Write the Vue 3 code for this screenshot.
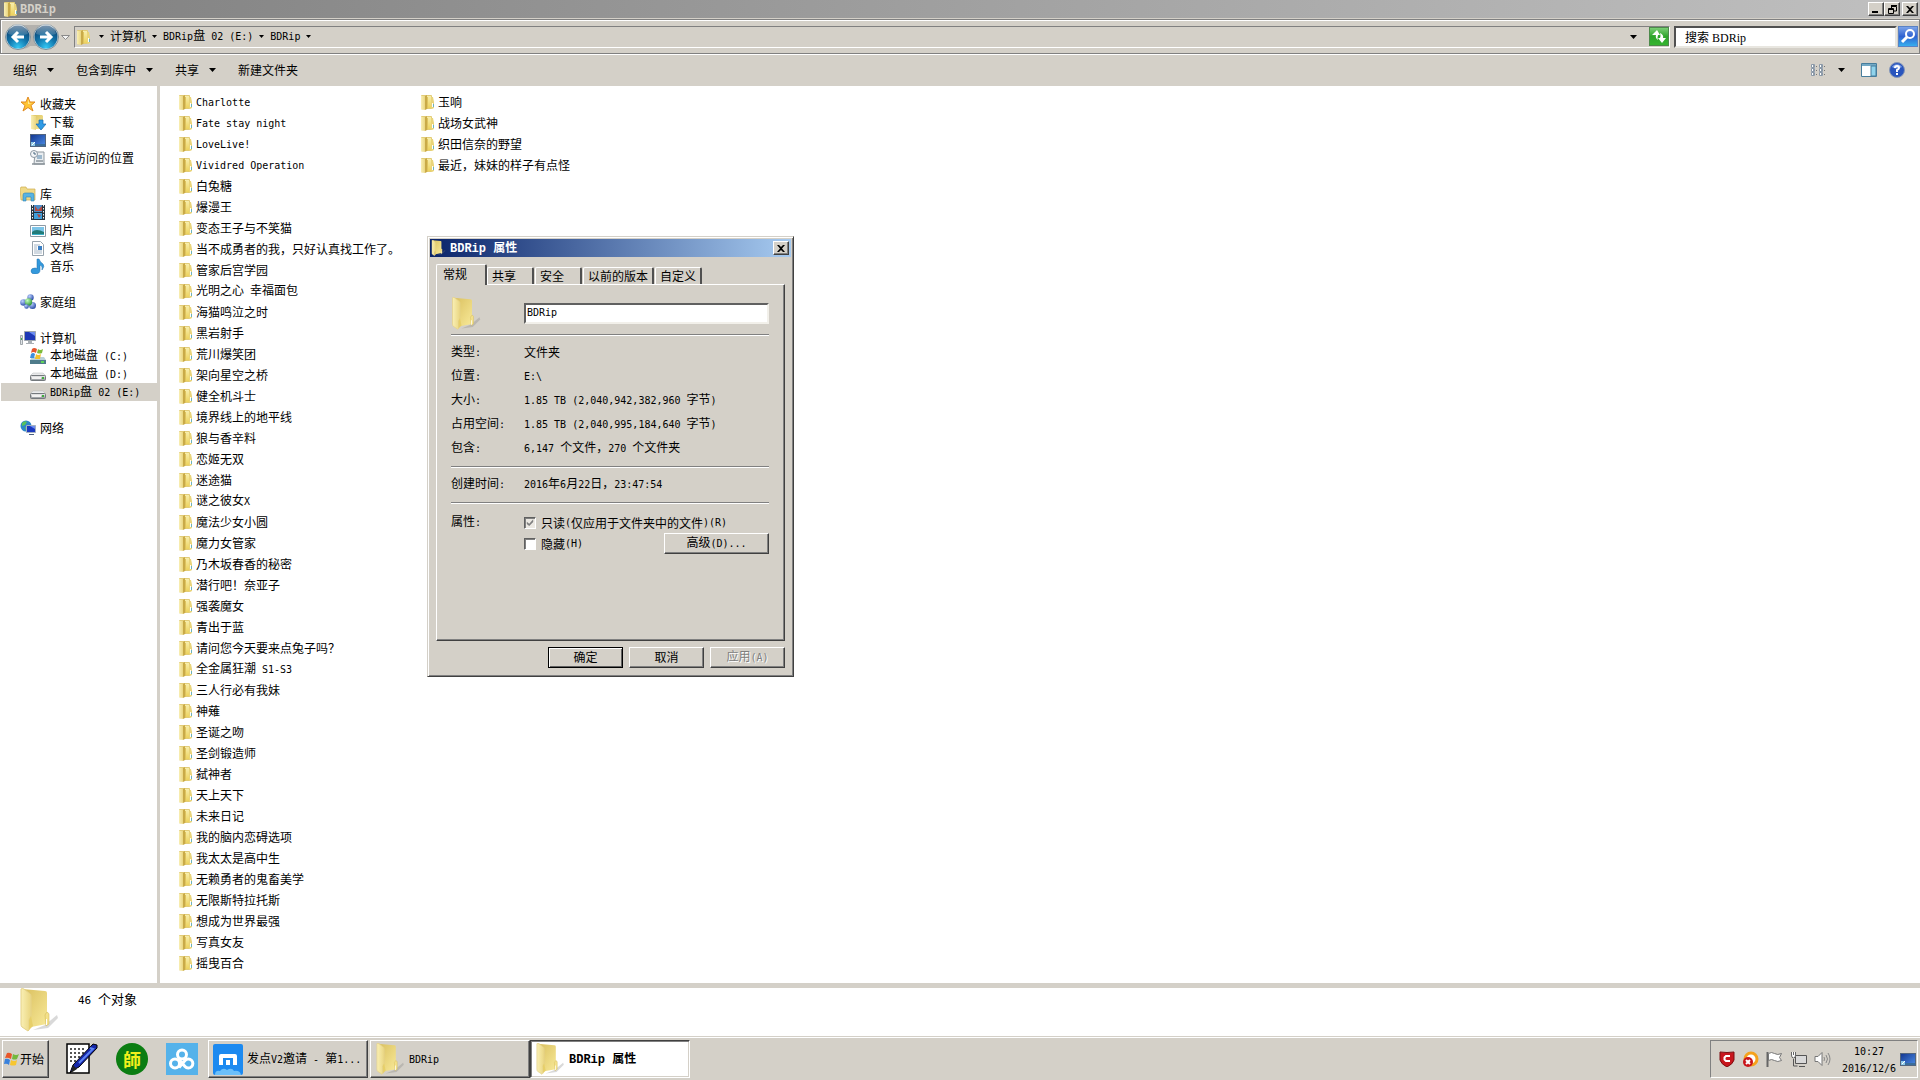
<script setup>
import { h } from 'vue'

// Latin runs are set in a half-width face, so two letters fill one Chinese cell
const T = (props) =>
  props.t
    .split(/([\x20-\x7e]+)/)
    .filter((s) => s)
    .map((s) => (/^[\x20-\x7e]/.test(s) ? h('span', { class: 'latin' }, s) : s))
T.props = ['t']

const Icon = (props) =>
  h('svg', { class: 'icon', width: props.w || 16, height: props.h || props.w || 16, 'aria-hidden': 'true' }, [
    h('use', { href: '#' + props.n }),
  ])
Icon.props = ['n', 'w', 'h']

const crumbs = ['计算机', 'BDRip盘 02 (E:)', 'BDRip']
const commands = [
  { label: '组织', menu: true },
  { label: '包含到库中', menu: true },
  { label: '共享', menu: true },
  { label: '新建文件夹', menu: false },
]
const tree = [
  { icon: 'star', label: '收藏夹', items: [['download', '下载'], ['desktop', '桌面'], ['recent', '最近访问的位置']] },
  { icon: 'library', label: '库', items: [['video', '视频'], ['picture', '图片'], ['document', '文档'], ['music', '音乐']] },
  { icon: 'homegroup', label: '家庭组', items: [] },
  { icon: 'computer', label: '计算机', items: [['sysdisk', '本地磁盘 (C:)'], ['disk', '本地磁盘 (D:)'], ['disk', 'BDRip盘 02 (E:)']] },
  { icon: 'network', label: '网络', items: [] },
]
const current = 'BDRip盘 02 (E:)'
const folders = [
  'Charlotte', 'Fate stay night', 'LoveLive!', 'Vividred Operation', '白兔糖', '爆漫王', '变态王子与不笑猫',
  '当不成勇者的我，只好认真找工作了。', '管家后宫学园', '光明之心 幸福面包', '海猫鸣泣之时', '黑岩射手', '荒川爆笑团',
  '架向星空之桥', '健全机斗士', '境界线上的地平线', '狼与香辛料', '恋姬无双', '迷途猫', '谜之彼女X', '魔法少女小圆',
  '魔力女管家', '乃木坂春香的秘密', '潜行吧！奈亚子', '强袭魔女', '青出于蓝', '请问您今天要来点兔子吗？',
  '全金属狂潮 S1-S3', '三人行必有我妹', '神薙', '圣诞之吻', '圣剑锻造师', '弑神者', '天上天下', '未来日记',
  '我的脑内恋碍选项', '我太太是高中生', '无赖勇者的鬼畜美学', '无限斯特拉托斯', '想成为世界最强', '写真女友', '摇曳百合',
  '玉响', '战场女武神', '织田信奈的野望', '最近，妹妹的样子有点怪',
]
const tabs = ['常规', '共享', '安全', '以前的版本', '自定义']
const facts = [
  ['类型:', '文件夹'],
  ['位置:', 'E:\\'],
  ['大小:', '1.85 TB (2,040,942,382,960 字节)'],
  ['占用空间:', '1.85 TB (2,040,995,184,640 字节)'],
  ['包含:', '6,147 个文件，270 个文件夹'],
]
</script>

<template>
  <div class="screen">
    <svg width="0" height="0" class="defs" aria-hidden="true">
      <defs>
        <linearGradient id="gLeaf" x1="0" x2="1" y1="0" y2="0"><stop offset="0" stop-color="#f9efb4" /><stop offset="1" stop-color="#ead681" /></linearGradient>
        <linearGradient id="gBack" x1="0" x2="1" y1="0" y2="1"><stop offset="0" stop-color="#d9bf5e" /><stop offset="1" stop-color="#f8e998" /></linearGradient>
        <linearGradient id="gPanel" x1="0" x2="0" y1="0" y2="1"><stop offset="0" stop-color="#f8efb0" /><stop offset="1" stop-color="#ecd056" /></linearGradient>
        <radialGradient id="gOrb" cx=".5" cy=".95" r=".95"><stop offset="0" stop-color="#35c8f4" /><stop offset=".45" stop-color="#1277ad" /><stop offset="1" stop-color="#0b3a68" /></radialGradient>
        <linearGradient id="gShine" x1="0" x2="0" y1="0" y2="1"><stop offset="0" stop-color="#fff" stop-opacity=".85" /><stop offset="1" stop-color="#fff" stop-opacity=".2" /></linearGradient>
        <linearGradient id="gScreen" x1="0" x2="1" y1="0" y2="1"><stop offset="0" stop-color="#12358f" /><stop offset="1" stop-color="#4d8ee8" /></linearGradient>
        <linearGradient id="gGreen" x1="0" x2="0" y1="0" y2="1"><stop offset="0" stop-color="#7fd07a" /><stop offset=".5" stop-color="#2fa52c" /><stop offset="1" stop-color="#35b52f" /></linearGradient>
        <linearGradient id="gFind" x1="0" x2="0" y1="0" y2="1"><stop offset="0" stop-color="#7fa6ea" /><stop offset=".5" stop-color="#2f62d0" /><stop offset="1" stop-color="#38b2f0" /></linearGradient>
        <radialGradient id="gBall" cx=".35" cy=".3" r=".8"><stop offset="0" stop-color="#bcd2ff" /><stop offset="1" stop-color="#1c3f9f" /></radialGradient>
        <radialGradient id="gBallG" cx=".35" cy=".3" r=".8"><stop offset="0" stop-color="#c5ffc0" /><stop offset="1" stop-color="#1f8a2a" /></radialGradient>
        <linearGradient id="gDisk" x1="0" x2="0" y1="0" y2="1"><stop offset="0" stop-color="#f2f2f2" /><stop offset="1" stop-color="#8d9296" /></linearGradient>
      </defs>
      <symbol id="folder" viewBox="0 0 16 16">
        <path d="M2.500 1.500H12.500V14.500H7L2.500 15Z" fill="url(#gPanel)" stroke="#e2cc78" />
        <path d="M6 2l2-1v14l-2 1z" fill="#c9aa48" />
        <path d="M8 3h1v12H8z" fill="#dfc45f" />
        <path d="M2 2l4 0v14l-4-1z" fill="url(#gLeaf)" />
        <path d="M12 3h2l1 5v6l-2 1h-1z" fill="#e9d47a" />
        <path d="M13 9h1v4h-1z" fill="#fff" /><path d="M14 10h1v3h-1z" fill="#6cb2bd" />
      </symbol>
      <symbol id="bigfolder" viewBox="0 0 40 44">
        <path d="M26 37 L38 27 L39 30 L29 40 L14 42Z" fill="#777" opacity=".28" />
        <path d="M3 1 L26 3 Q28 3 28 5 L28 36 L12 39Z" fill="url(#gBack)" />
        <path d="M2 1 Q3 0 5 1 L10 5 Q12 6 12 8 L12 28 L10 32 L10 42 L9 43 L3 39 Q2 38 2 36Z" fill="url(#gLeaf)" stroke="#e5d28a" stroke-width="1" />
        <path d="M10 32 L12 28 L14 38 L10 42Z" fill="#e7cf69" />
        <path d="M26 27 Q28 22 30 26 L30 36 L27 38Z" fill="#f4e189" stroke="#cdb254" stroke-width=".5" /><path d="M27 31h1v6h-1z" fill="#fff" />
      </symbol>
      <symbol id="star" viewBox="0 0 16 16"><path d="M8 1 L10 6 L15 6 L11 9.500 L13 15 L8 11.500 L3 15 L5 9.500 L1 6 L6 6Z" fill="#ffc534" stroke="#e08a22" /><path d="M8 3 L9 7 L12 7 L8 8Z" fill="#fff1a8" /></symbol>
      <symbol id="download" viewBox="0 0 16 16"><path d="M1 1h11l1 1v13H5l-4-1z" fill="url(#gBack)" /><path d="M1 1l5 1v14l-5-1z" fill="url(#gLeaf)" /><path d="M9 6h4v4h3l-5 6-5-6h3z" fill="#2f9be6" stroke="#1767ad" stroke-width=".7" /></symbol>
      <symbol id="desktop" viewBox="0 0 16 16"><rect x=".5" y="2.500" width="15" height="12" fill="url(#gScreen)" stroke="#51647f" /><path d="M1 12h14v2H1z" fill="#3a6d9b" /><path d="M1 10h4v4H1z" fill="#8cc8e8" /><path d="M2 13l3-3" stroke="#fff" /></symbol>
      <symbol id="recent" viewBox="0 0 16 16"><path d="M5 2h9v12H4z" fill="#e9edf0" stroke="#8f989f" /><path d="M7 5h5v4H7z" fill="#9db8cd" /><path d="M6 11h7M2 14h13" stroke="#8b949b" stroke-width="1.500" /><circle cx="4" cy="4" r="3.500" fill="#f4f6f8" stroke="#8b97a3" /><path d="M4 2v2h2" stroke="#46667f" fill="none" /></symbol>
      <symbol id="library" viewBox="0 0 16 16"><path d="M0 3l1-2h5l1 2h8v11H1z" fill="#efd987" stroke="#cfae4f" stroke-width=".7" /><path d="M3 15V9q0-2 2-2h7q2 0 2 2v6h-3v-4H6v4z" fill="#58b3e2" stroke="#2c83b7" stroke-width=".6" /></symbol>
      <symbol id="video" viewBox="0 0 16 16"><path d="M1 1h14v15H1z" fill="#26343f" /><path d="M4 1h8v7H4z" fill="#4c8dc8" /><path d="M4 9h8v6H4z" fill="#3fa0dd" /><path d="M5 2l3 4 4-4v5H5zM7 10l4 1-2 3z" fill="#b4483d" /><path d="M2.500 1v15M13.500 1v15" stroke="#f5f5f5" stroke-dasharray="1.500 1.500" /></symbol>
      <symbol id="picture" viewBox="0 0 16 16"><path d="M.5 3.500h15v11H.5z" fill="#fff" stroke="#8d99a4" /><path d="M2 5h12v8H2z" fill="#7cc4e8" /><path d="M2 10q4-4 12 0v3H2z" fill="#227b78" /><path d="M2 12h12v1H2z" fill="#3bb0c9" /></symbol>
      <symbol id="document" viewBox="0 0 16 16"><path d="M2.500 1.500h8l3 3v11h-11z" fill="#fff" stroke="#97a3ad" /><path d="M4 5h6M4 7h3M4 9h3M4 11h8M4 13h8" stroke="#a3b4c4" /><path d="M8 6h4v4H8z" fill="#3b7fc4" /></symbol>
      <symbol id="music" viewBox="0 0 16 16"><path d="M9 1q1 3 4 5 2 2-1 6 1-4-2-5v5q0 4-5 4-4 0-4-3t4-3q2 0 2 1V1z" fill="#3399dc" stroke="#1c6eae" stroke-width=".5" /></symbol>
      <symbol id="homegroup" viewBox="0 0 16 16"><circle cx="10.500" cy="3.500" r="3.200" fill="url(#gBall)" /><circle cx="3.500" cy="8.500" r="3.300" fill="url(#gBall)" /><circle cx="12.500" cy="11.500" r="3.500" fill="url(#gBall)" /><circle cx="8.500" cy="8" r="3.700" fill="url(#gBallG)" /><circle cx="6.500" cy="12.500" r="2.300" fill="url(#gBall)" /></symbol>
      <symbol id="computer" viewBox="0 0 16 16"><path d="M4.500 1.500h11v9h-11z" fill="#1d38b6" stroke="#9ea6ad" /><path d="M9 2h6v4z" fill="#6b8cf0" /><path d="M8 11h4v2h2v1H6v-1h2z" fill="#a9afb4" /><path d="M.5 5.500h2v9h-2z" fill="#dfe3e5" stroke="#8e959a" stroke-width=".8" /><path d="M1 8h1v2H1z" fill="#3cb043" /></symbol>
      <symbol id="sysdisk" viewBox="0 0 16 16"><path d="M2 9h12l2 3H0z" fill="#b9d0da" /><path d="M0 12h16v4H0z" fill="#4f7b8a" /><path d="M11 13h3v2h-3z" fill="#5fd45a" /><path d="M2 1q2-2 5 0L6 5Q3 3 1 5z" fill="#e4552d" /><path d="M8 1q2 2 5 0l-1 4q-2 1-5 0z" fill="#7dbb3a" /><path d="M1 6q2-2 4 0l-1 4H0z" fill="#3d8ede" /><path d="M6 6q2 2 5 0l-1 5H5z" fill="#f4c12e" /></symbol>
      <symbol id="disk" viewBox="0 0 16 16"><path d="M3 7h10l3 3H0z" fill="#e9eaeb" stroke="#b5b8ba" stroke-width=".5" /><rect x=".5" y="9.500" width="15" height="5" rx="1" fill="url(#gDisk)" stroke="#74797d" /><path d="M2 11h9v2H2z" fill="#f1f1f1" /><path d="M12 11h2v2h-2z" fill="#3fae3c" /></symbol>
      <symbol id="network" viewBox="0 0 16 16"><circle cx="6" cy="6" r="5.500" fill="#2d86c9" /><path d="M2 3q3-3 5-1l-2 3-3 1zM5 7l3 1-2 3z" fill="#58c25a" /><path d="M6.500 5.500h9v7h-9z" fill="#1b39c0" stroke="#a4b0c0" /><path d="M10 6h5v3z" fill="#6c8cf0" /><path d="M9 14h5v1H9z" fill="#4a5f80" /></symbol>
      <symbol id="caret" viewBox="0 0 7 4"><path d="M0 0h7L3.500 4z" fill="#000" /></symbol>
      <symbol id="tiny" viewBox="0 0 5 3"><path d="M0 0h5L2.500 3z" fill="#000" /></symbol>
      <symbol id="cross" viewBox="0 0 8 7"><path d="M0 0h2l2 2 2-2h2L5 3.500 8 7H6L4 5 2 7H0l3-3.500z" fill="#000" /></symbol>
      <symbol id="winflag" viewBox="0 0 16 16"><path d="M3 2q2-1 5 1L7 8Q4 6 1 7z" fill="#e8562a" /><path d="M9 3q3 2 6 0l-2 5q-2 1-5 0z" fill="#74b83d" /><path d="M1 8q3-1 5 1l-1 5q-2-2-5-1z" fill="#3a82dc" /><path d="M7 9q3 2 6 0l-1 5q-3 1-6 0z" fill="#f7c62f" /></symbol>
    </svg>

    <header class="titlebar">
      <Icon n="folder" />
      <strong><T t="BDRip" /></strong>
      <div class="winbtns">
        <button type="button" aria-label="最小化"><svg width="8" height="8"><path d="M0 6h6v2H0z" /></svg></button>
        <button type="button" aria-label="还原"><svg width="9" height="9"><path d="M3 1.500h5.500V6H6M3.500 0v3M3 .5h6M.5 3.500h5v5h-5zM0 4.500h6" fill="none" stroke="#000" /></svg></button>
        <button type="button" aria-label="关闭" class="apart"><Icon n="cross" w="8" h="7" /></button>
      </div>
    </header>

    <nav class="navbar">
      <svg class="orbs" width="70" height="28" aria-hidden="true">
        <path d="M14 2h28q12 0 12 12t-12 12q-6 0-9-3h-7q-3 3-9 3z" fill="#b3b1ad" />
        <g><circle cx="14" cy="14" r="12.500" fill="#d9e4ea" stroke="#7f9099" /><circle cx="14" cy="14" r="11.500" fill="url(#gOrb)" /><path d="M4 11a10 10 0 0 1 20 0q-10 3-20 0z" fill="url(#gShine)" opacity=".6" /><path d="M20 14H9m5-5l-5 5 5 5" stroke="#fff" stroke-width="3" fill="none" /></g>
        <g><circle cx="42" cy="14" r="12.500" fill="#d9e4ea" stroke="#7f9099" /><circle cx="42" cy="14" r="11.500" fill="url(#gOrb)" /><path d="M32 11a10 10 0 0 1 20 0q-10 3-20 0z" fill="url(#gShine)" opacity=".6" /><path d="M36 14h11m-5-5l5 5-5 5" stroke="#fff" stroke-width="3" fill="none" /></g>
        <path d="M57.500 12.500h8l-4 4z" fill="#f4f4f4" stroke="#8b8b8b" />
      </svg>
      <div class="address">
        <Icon n="folder" />
        <Icon n="tiny" w="5" h="3" />
        <template v-for="c in crumbs" :key="c">
          <a href="#"><T :t="c" /></a>
          <Icon n="tiny" w="5" h="3" />
        </template>
        <button type="button" class="plain drop" aria-label="历史记录"><Icon n="caret" w="7" h="4" /></button>
        <button type="button" class="plain" aria-label="刷新">
          <svg width="20" height="19"><rect x=".5" y=".5" width="19" height="18" fill="url(#gGreen)" stroke="#4d8a4b" /><path d="M9 13Q6 11 7 8H3l5-5 3 5H9q-1 3 0 5zM11 6q4 2 3 5h3l-4 5-4-5h2q1-2 0-5z" fill="#fff" /></svg>
        </button>
      </div>
      <input class="search" type="text" value="搜索 BDRip" aria-label="搜索" />
      <button type="button" class="plain" aria-label="开始搜索">
        <svg width="20" height="21"><rect x=".5" y=".5" width="19" height="20" fill="url(#gFind)" stroke="#5a82c4" /><circle cx="12" cy="8" r="4" fill="none" stroke="#fff" stroke-width="2" /><path d="M9 11l-5 5" stroke="#fff" stroke-width="3" /></svg>
      </button>
    </nav>

    <div class="toolbar">
      <button v-for="c in commands" :key="c.label" type="button" class="plain cmd">
        {{ c.label }}<Icon v-if="c.menu" n="caret" w="7" h="4" />
      </button>
      <div class="views">
        <button type="button" class="plain" aria-label="更改视图"><svg width="16" height="13"><path d="M1.500.5h3v3h-3zM1.500 4.500h3v3h-3zM1.500 8.500h3v3h-3zM9.500.5h3v3h-3zM9.500 4.500h3v3h-3zM9.500 8.500h3v3h-3z" fill="#fff" stroke="#8a99a8" /><path d="M3 2h1M3 6h1M3 10h1M11 2h1M11 6h1M11 10h1" stroke="#223a55" /><path d="M6 2.500h1M6 6.500h1M6 10.500h1M14 2.500h1M14 6.500h1M14 10.500h1" stroke="#777" /></svg></button>
        <button type="button" class="plain" aria-label="更多选项"><Icon n="caret" w="7" h="4" /></button>
        <button type="button" class="plain preview" aria-label="预览窗格"><svg width="16" height="14"><path d="M.5.5h15v13H.5z" fill="#fff" stroke="#477d9c" /><path d="M1 1h14v2H1z" fill="#73a9c5" /><path d="M10 3h5v10h-5z" fill="#8fd3ec" stroke="#477d9c" /></svg></button>
        <button type="button" class="plain" aria-label="帮助"><svg width="16" height="16"><circle cx="8" cy="8" r="7.500" fill="#2a55bd" stroke="#8496b8" /><path d="M3 5a6 6 0 0 1 10 0q-5 3-10 0z" fill="#7ea0e6" /><path d="M6 6q0-2 2-2t2 2q0 1-2 2v2M8 11v2" fill="none" stroke="#fff" stroke-width="2" /></svg></button>
      </div>
    </div>

    <main class="body">
      <aside class="tree">
        <ul v-for="g in tree" :key="g.label">
          <li class="root"><Icon :n="g.icon" /><span>{{ g.label }}</span></li>
          <li v-for="i in g.items" :key="i[1]" :class="{ on: i[1] === current }"><Icon :n="i[0]" /><span><T :t="i[1]" /></span></li>
        </ul>
      </aside>
      <ul class="files">
        <li v-for="f in folders" :key="f"><Icon n="folder" /><span><T :t="f" /></span></li>
      </ul>
    </main>

    <section class="details">
      <Icon n="bigfolder" w="40" h="44" />
      <span><T t="46 个对象" /></span>
    </section>

    <footer class="taskbar">
      <button type="button" class="raised start"><Icon n="winflag" />开始</button>
      <div class="quick">
        <button type="button" class="plain" aria-label="记事"><svg width="32" height="32"><path d="M1 1h22v29H1z" fill="#fff" stroke="#000" stroke-width="1.500" /><path d="M4 6h16M4 10h16M4 14h14M4 18h10" stroke="#555" stroke-width="2" stroke-dasharray="2 2" /><path d="M27 1l4 1v3L13 24l-6 3-3 3 3-8z" fill="#1426a8" stroke="#000" /><path d="M24 5l3 1L13 20" fill="none" stroke="#5c83f2" stroke-width="2" /><path d="M7 22l4 4-6 4z" fill="#222" /></svg></button>
        <button type="button" class="plain seal">師</button>
        <button type="button" class="plain" aria-label="云盘"><svg width="32" height="32"><rect width="32" height="32" fill="#55b2ea" /><g fill="none" stroke="#fff" stroke-width="3"><circle cx="16" cy="11.500" r="4.500" /><circle cx="9" cy="20.500" r="4.500" /><path d="M13 16.500l6 7a4.500 4.500 0 1 0 0-6l-6 7" /></g></svg></button>
      </div>
      <button type="button" class="raised task">
        <svg width="30" height="31"><rect width="30" height="31" rx="2" fill="#1d8af0" /><path d="M8 21v-9h14v9" fill="none" stroke="#fff" stroke-width="4" stroke-linejoin="round" /><path d="M13 16h4v5h-4z" fill="#fff" /><path d="M2 31q0-5 5-4 3-4 7-1 5-3 7 1 6-1 7 4z" fill="#6cc0fa" /></svg>
        <span><T t="发点V2邀请 - 第1..." /></span>
      </button>
      <button type="button" class="raised task"><Icon n="bigfolder" w="30" h="32" /><span><T t="BDRip" /></span></button>
      <button type="button" class="raised task active"><Icon n="bigfolder" w="30" h="32" /><strong><T t="BDRip 属性" /></strong></button>
      <div class="tray">
        <svg width="16" height="16"><path d="M1 1q7 1 14 0v8q-1 4-7 7-6-3-7-7z" fill="#c8161d" stroke="#7d0d10" /><path d="M11 5H7L5.500 6.500v2L7 10h4" fill="none" stroke="#fff" stroke-width="2" /></svg>
        <svg width="17" height="17"><circle cx="9" cy="8" r="6" fill="#fff" stroke="#f5a21d" stroke-width="3" /><circle cx="6" cy="11" r="5" fill="#c9151b" /><path d="M4 9l4 4m0-4l-4 4" stroke="#fff" stroke-width="2" /></svg>
        <svg width="17" height="16"><path d="M1.500 1v15" stroke="#666" stroke-width="2" /><path d="M2.500 2.500q3-2 6 0t7 0l-2 4 2 3q-4 2-7 0t-6 0z" fill="#fff" stroke="#777" /></svg>
        <svg width="17" height="17"><path d="M5.500 4.500h11v8h-11z" fill="#d9d9d9" stroke="#555" /><path d="M9 15.500h6M3.500 8v7h4" stroke="#555" fill="none" /><path d="M1.500 1v3q0 3 2 3t2-3V1M3.500 1v3" stroke="#666" fill="#fff" /></svg>
        <svg width="17" height="16"><path d="M1 5.500h3l4-4v13l-4-4H1z" fill="#fff" stroke="#777" /><path d="M10 6q1 2 0 4M12 4q3 4 0 8M14 2q4 6 0 12" fill="none" stroke="#888" /></svg>
        <time><T t="10:27" /><br /><T t="2016/12/6" /></time>
        <Icon n="desktop" />
      </div>
    </footer>

    <form class="dialog" role="dialog" aria-label="BDRip 属性" @submit.prevent>
      <div class="caption">
        <Icon n="bigfolder" w="15" h="16" />
        <strong><T t="BDRip 属性" /></strong>
        <button type="button" class="x" aria-label="关闭"><Icon n="cross" w="8" h="7" /></button>
      </div>
      <div class="tabs" role="tablist">
        <button v-for="(t, i) in tabs" :key="t" type="button" role="tab" :aria-selected="i === 0">{{ t }}</button>
      </div>
      <div class="pane">
        <div class="row name">
          <span class="key"><Icon n="bigfolder" w="30" h="33" /></span>
          <input type="text" value="BDRip" aria-label="名称" />
        </div>
        <hr />
        <dl>
          <div v-for="f in facts" :key="f[0]" class="row"><dt class="key"><T :t="f[0]" /></dt><dd><T :t="f[1]" /></dd></div>
        </dl>
        <hr />
        <dl>
          <div class="row"><dt class="key"><T t="创建时间:" /></dt><dd><T t="2016年6月22日，23:47:54" /></dd></div>
        </dl>
        <hr />
        <div class="attrs">
          <span class="key"><T t="属性:" /></span>
          <div class="checks">
            <label><input type="checkbox" class="mixed" checked /><T t="只读(仅应用于文件夹中的文件)(R)" /></label>
            <div class="line">
              <label><input type="checkbox" /><T t="隐藏(H)" /></label>
              <button type="button" class="raised advanced"><T t="高级(D)..." /></button>
            </div>
          </div>
        </div>
      </div>
      <div class="actions">
        <button type="submit" class="raised default">确定</button>
        <button type="button" class="raised">取消</button>
        <button type="button" class="raised" disabled><T t="应用(A)" /></button>
      </div>
    </form>
  </div>
</template>

<style>
body { margin: 0; }
.latin { font-family: "DejaVu Sans Mono", monospace; font-size: 10px; white-space: pre; }
strong .latin { font-family: "Liberation Mono", monospace; font-size: 12px; }
.details .latin { font-size: 11px; }
.icon { display: block; flex: none; }
</style>

<style scoped>
.screen {
  height: 100vh;
  display: flex;
  flex-direction: column;
  position: relative;
  overflow: hidden;
  background: #d4d0c8;
  color: #000;
  font: 12px/18px "Noto Sans CJK SC", sans-serif;
}
.defs { position: absolute; }
ul, dl, dd { margin: 0; padding: 0; list-style: none; }
svg { display: block; flex: none; }
button, input { font: inherit; color: inherit; box-sizing: border-box; margin: 0; border-radius: 0; }
button { padding: 0; white-space: nowrap; }
a { color: inherit; text-decoration: none; }
.plain { border: 0; background: none; }

.titlebar {
  height: 18px;
  flex: none;
  display: flex;
  align-items: center;
  gap: 2px;
  padding: 0 2px;
  background: linear-gradient(90deg, #808080, #c0c0c0);
  color: #d4d0c8;
}
.winbtns { margin-left: auto; display: flex; }
.winbtns button, .x {
  width: 16px;
  height: 14px;
  display: flex;
  align-items: center;
  justify-content: center;
  background: #d4d0c8;
  border: 1px solid;
  border-color: #fff #404040 #404040 #fff;
  box-shadow: inset -1px -1px #808080;
}
.winbtns .apart { margin-left: 2px; }

.navbar {
  height: 35px;
  flex: none;
  box-sizing: border-box;
  margin-top: 1px;
  display: flex;
  align-items: center;
  padding: 0 1px 0 3px;
  border: 1px solid #808080;
  box-shadow: inset 1px 1px #fff, 0 1px #fff;
}
.address {
  flex: 1;
  height: 22px;
  box-sizing: border-box;
  display: flex;
  align-items: center;
  border: 1px solid;
  border-color: #808080 #fff #fff #808080;
}
.address > .icon { margin-right: 6px; }
.address > .icon:first-child { margin-right: 8px; }
.address a { line-height: 16px; margin-right: 6px; padding-bottom: 2px; }
.drop { margin-left: auto; margin-right: 12px; }
.search {
  width: 223px;
  height: 22px;
  margin: 0 1px 0 4px;
  padding: 0 9px;
  border: 2px solid;
  border-color: #505050 #e8e6e0 #e8e6e0 #505050;
  background: #fff;
  font-family: "Liberation Serif", "Noto Sans CJK SC", serif;
}
.toolbar {
  height: 32px;
  flex: none;
  display: flex;
  align-items: center;
  padding: 0 15px 0 13px;
  gap: 22px;
}
.cmd { display: flex; align-items: center; gap: 10px; }
.views { margin-left: auto; display: flex; align-items: center; gap: 12px; }
.preview { margin-left: 4px; }

.body { flex: 1; min-height: 0; display: flex; background: #fff; }
.tree { width: 157px; flex: none; padding-top: 9px; box-sizing: border-box; }
.tree ul { margin-bottom: 18px; }
.tree li { height: 18px; margin-left: 1px; padding-left: 29px; display: flex; align-items: center; gap: 4px; white-space: nowrap; }
.tree li.root { padding-left: 19px; }
.tree .on { background: #d4d0c8; }
.files {
  flex: 1;
  display: flex;
  flex-flow: column wrap;
  align-content: flex-start;
  padding: 5px 0 0 17px;
  border-left: 3px solid #d4d0c8;
}
.files li { width: 242px; height: 21px; display: flex; align-items: center; gap: 3px; white-space: nowrap; }

.details {
  height: 48px;
  flex: none;
  box-sizing: border-box;
  margin-top: 5px;
  padding: 0 19px;
  display: flex;
  gap: 19px;
  background: #fff;
  font-size: 13px;
}
.details span { margin-top: 2px; }

.taskbar {
  height: 44px;
  flex: none;
  box-sizing: border-box;
  padding: 3px 2px 2px;
  border-top: 1px solid #d4d0c8;
  box-shadow: inset 0 1px #fff;
  display: flex;
  gap: 2px;
}
.raised {
  background: #d4d0c8;
  border: 1px solid;
  border-color: #fff #404040 #404040 #fff;
  box-shadow: inset -1px -1px #808080;
}
.taskbar .raised { height: 38px; }
.start { width: 47px; display: flex; align-items: center; padding-left: 1px; }
.quick { display: flex; gap: 18px; margin: 0 8px 0 15px; align-items: center; }
.seal { width: 32px; height: 32px; border-radius: 50%; background: #0b7d12; color: #f2f01c; font-size: 18px; font-weight: bold; line-height: 30px; }
.task { width: 160px; display: flex; align-items: center; gap: 4px; padding: 0 4px; }
.task.active { background: #fff; border-color: #404040 #fff #fff #404040; box-shadow: inset 1px 1px #808080, inset -1px -1px #d4d0c8; margin-left: -2px; }
.tray {
  margin-left: auto;
  height: 38px;
  box-sizing: border-box;
  padding: 0 1px 0 8px;
  display: flex;
  align-items: center;
  gap: 7px;
  border: 1px solid;
  border-color: #808080 #fff #fff #808080;
}
.tray time { width: 56px; margin: 0 -4px 0 3px; line-height: 15px; text-align: center; }

.dialog {
  position: absolute;
  left: 427px;
  top: 236px;
  width: 367px;
  box-sizing: border-box;
  padding: 2px 2px 8px;
  background: #d4d0c8;
  border: 1px solid;
  border-color: #d4d0c8 #404040 #404040 #d4d0c8;
  box-shadow: inset 1px 1px #fff, inset -1px -1px #808080;
}
.caption {
  height: 18px;
  display: flex;
  align-items: center;
  gap: 4px;
  padding: 0 2px 0 1px;
  color: #fff;
  background: linear-gradient(90deg, #0a246a, #a6caf0);
}
.x { margin-left: auto; }
.tabs { display: flex; align-items: flex-end; gap: 1px; margin: 7px 6px 0; height: 20px; }
.tabs button {
  height: 17px;
  padding: 0 16px 0 4px;
  line-height: 16px;
  background: none;
  border: solid;
  border-width: 1px 2px 0 1px;
  border-color: #fff #505050 #fff #fff;
  border-radius: 2px 2px 0 0;
}
.tabs button:first-child { height: 21px; margin-bottom: -1px; padding: 0 18px 2px 6px; position: relative; background: #d4d0c8; margin-right: -1px; }
.tabs button:nth-child(n + 4) { padding-right: 4px; }
.pane {
  height: 357px;
  box-sizing: border-box;
  margin: 0 6px;
  padding: 10px 15px 10px 14px;
  border: 1px solid;
  border-color: #fff #404040 #404040 #fff;
  box-shadow: inset -1px -1px #808080;
}
.row { display: flex; align-items: center; height: 24px; }
.key { width: 73px; flex: none; }
.name { height: 36px; }
.name input {
  flex: 1;
  height: 21px;
  padding: 0 1px 1px;
  background: #fff;
  border: 2px solid;
  border-color: #606060 #f2f0ea #f2f0ea #606060;
  font: 10px "DejaVu Sans Mono", monospace;
}
hr { height: 1px; margin: 3px 0 4px; border: 0; background: #808080; border-bottom: 1px solid #fff; }
dl + hr { margin: 6px 0 4px; }
.attrs { display: flex; padding-top: 4px; }
.checks { flex: 1; }
.checks label { display: flex; align-items: center; height: 21px; }
.line { display: flex; align-items: center; justify-content: space-between; }
input[type="checkbox"] {
  appearance: none;
  width: 12px;
  height: 12px;
  margin-right: 5px;
  background: #fff;
  border: 1px solid;
  border-color: #606060 #fff #fff #606060;
  box-shadow: inset 1px 1px #808080;
}
.mixed { position: relative; }
input.mixed { background: #ece9e3; }
.mixed::after {
  content: "";
  position: absolute;
  inset: 1px;
  background: #808080;
  clip-path: polygon(10% 40%, 40% 65%, 90% 10%, 90% 45%, 40% 95%, 10% 70%);
}
.advanced { width: 105px; height: 21px; line-height: 16px; padding-bottom: 1px; }
.actions { display: flex; justify-content: flex-end; gap: 6px; margin: 6px 6px 0; }
.actions .raised { width: 75px; height: 21px; line-height: 16px; padding-bottom: 1px; }
.actions .default { outline: 1px solid #000; outline-offset: -1px; border-color: #000; box-shadow: inset 1px 1px #fff, inset -1px -1px #606060; }
.actions .raised:disabled { color: #808080; text-shadow: 1px 1px #fff; }
</style>
